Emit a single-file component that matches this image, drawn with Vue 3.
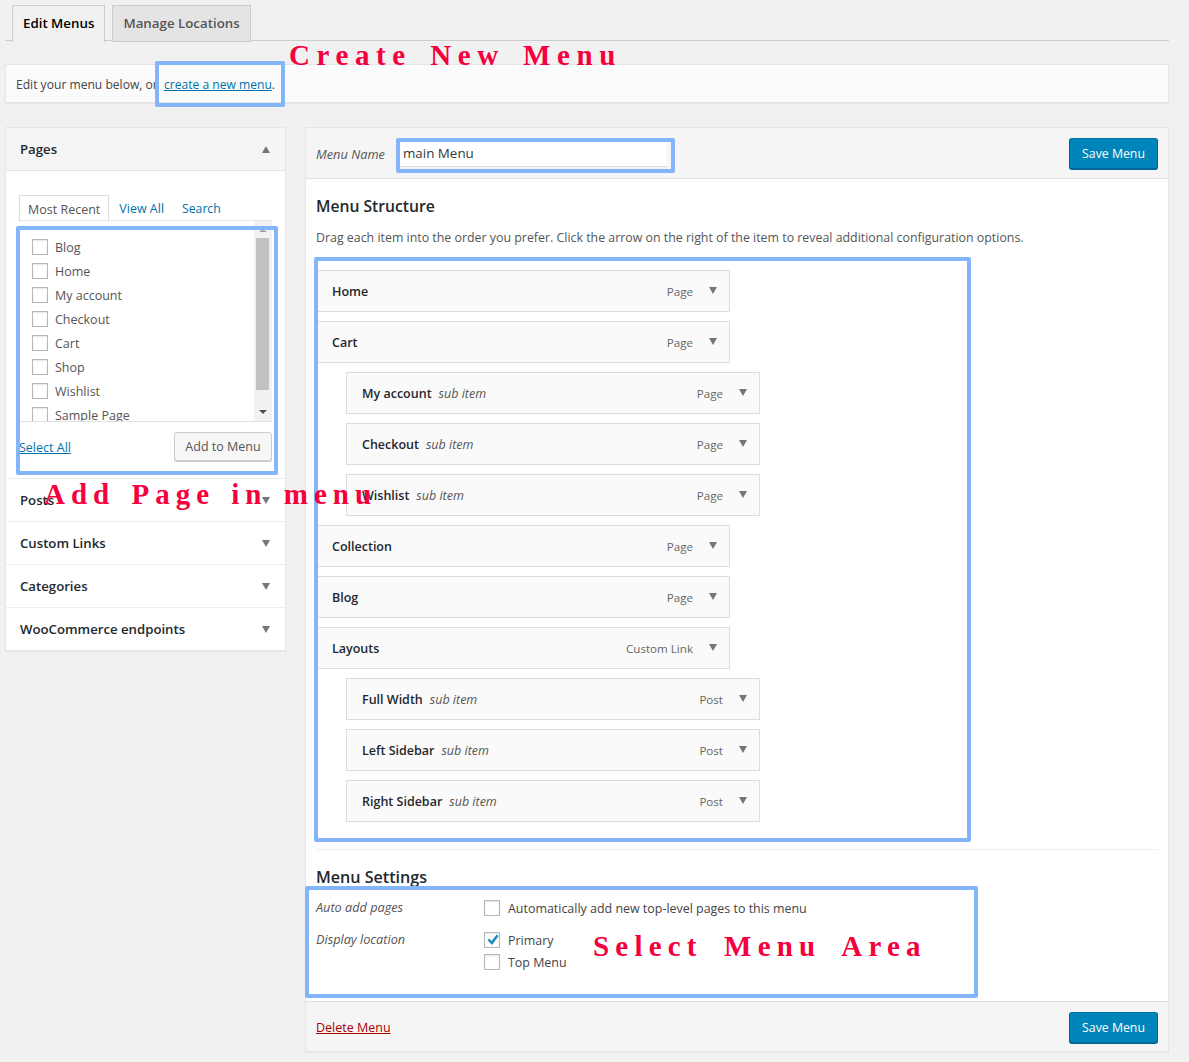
<script setup>
const pages = ['Blog', 'Home', 'My account', 'Checkout', 'Cart', 'Shop', 'Wishlist', 'Sample Page']
const closedBoxes = ['Posts', 'Custom Links', 'Categories', 'WooCommerce endpoints']

const menuItems = [
  { name: 'Home', type: 'Page' },
  { name: 'Cart', type: 'Page' },
  { name: 'My account', type: 'Page', sub: true },
  { name: 'Checkout', type: 'Page', sub: true },
  { name: 'Wishlist', type: 'Page', sub: true },
  { name: 'Collection', type: 'Page' },
  { name: 'Blog', type: 'Page' },
  { name: 'Layouts', type: 'Custom Link' },
  { name: 'Full Width', type: 'Post', sub: true },
  { name: 'Left Sidebar', type: 'Post', sub: true },
  { name: 'Right Sidebar', type: 'Post', sub: true }
]

// annotations painted on top of the screenshot
const marks = [
  { left: 155, top: 61, width: 130, height: 46 },
  { left: 396, top: 138, width: 279, height: 35 },
  { left: 16, top: 226, width: 262, height: 249 },
  { left: 314, top: 257, width: 657, height: 585 },
  { left: 305, top: 886, width: 673, height: 112 }
]
const notes = [
  { text: 'Create New Menu', left: 289, top: 37, spacing: 6.6, words: 4.5 },
  { text: 'Add Page in menu', left: 44, top: 476, spacing: 6, words: 3 },
  { text: 'Select Menu Area', left: 593, top: 928, spacing: 6.2, words: 8 }
]
</script>

<template>
  <div class="page">
    <div class="tabs">
      <span class="tab active">Edit Menus</span>
      <span class="tab">Manage Locations</span>
    </div>

    <div class="notice">
      Edit your menu below, or <a class="link">create a new menu</a>.
    </div>

    <div class="columns">
      <div class="side">
        <div class="box-head open">
          <h3>Pages</h3>
          <span class="arrow up"></span>
        </div>
        <div class="pages-body">
          <div class="mini-tabs">
            <span class="mini-tab active">Most Recent</span>
            <a class="mini-tab">View All</a>
            <a class="mini-tab">Search</a>
          </div>
          <div class="list-wrap">
            <ul class="list">
              <li v-for="p in pages" :key="p">
                <span class="check"></span>{{ p }}
              </li>
            </ul>
            <div class="scrollbar">
              <span class="sb-up"></span>
              <span class="sb-thumb"></span>
              <span class="sb-down"></span>
            </div>
          </div>
          <div class="add-row">
            <a class="link">Select All</a>
            <button class="add-btn">Add to Menu</button>
          </div>
        </div>
        <div v-for="b in closedBoxes" :key="b" class="box-head">
          <h3>{{ b }}</h3>
          <span class="arrow"></span>
        </div>
      </div>

      <div class="main">
        <div class="main-head">
          <label class="name-label">Menu Name</label>
          <input class="name-input" value="main Menu" />
          <button class="save">Save Menu</button>
        </div>

        <div class="main-body">
          <h3 class="title">Menu Structure</h3>
          <p class="hint">Drag each item into the order you prefer. Click the arrow on the right of the item to reveal additional configuration options.</p>

          <div class="items">
            <div v-for="item in menuItems" :key="item.name" class="item" :class="{ sub: item.sub }">
              <span class="item-name">{{ item.name }}</span>
              <em v-if="item.sub" class="item-sub">sub item</em>
              <span class="item-type">{{ item.type }}</span>
              <span class="arrow"></span>
            </div>
          </div>

          <div class="settings">
            <h3 class="title">Menu Settings</h3>
            <div class="set-row auto">
              <em class="set-label">Auto add pages</em>
              <div class="set-opts">
                <div class="opt"><span class="check"></span>Automatically add new top-level pages to this menu</div>
              </div>
            </div>
            <div class="set-row">
              <em class="set-label">Display location</em>
              <div class="set-opts">
                <div class="opt">
                  <span class="check">
                    <svg viewBox="0 0 16 16" width="16" height="16"><path d="M2.5 8.2 L4.2 6.6 L6.6 9.1 L11.6 2.6 L13.6 3.9 L7 13 Z" fill="#1e8cbe" /></svg>
                  </span>Primary
                </div>
                <div class="opt"><span class="check"></span>Top Menu</div>
              </div>
            </div>
          </div>
        </div>

        <div class="main-foot">
          <a class="delete">Delete Menu</a>
          <button class="save">Save Menu</button>
        </div>
      </div>
    </div>

    <span
      v-for="(m, i) in marks"
      :key="i"
      class="mark"
      :style="{ left: m.left + 'px', top: m.top + 'px', width: m.width + 'px', height: m.height + 'px' }"
    ></span>
    <span
      v-for="n in notes"
      :key="n.text"
      class="note"
      :style="{ left: n.left + 'px', top: n.top + 'px', letterSpacing: n.spacing + 'px', wordSpacing: n.words + 'px' }"
    >{{ n.text }}</span>
  </div>
</template>

<style>
html, body { background: #f1f1f1; }
</style>

<style scoped>
.page { position: relative; height: 1062px; box-sizing: border-box; padding: 0 20px 0 5px; font-family: "Open Sans", "Noto Sans", sans-serif; font-size: 13px; color: #444; background: #f1f1f1; overflow: hidden; }
h3 { margin: 0; font-weight: 600; }
.tabs { display: flex; gap: 7px; height: 41px; padding: 5px 0 0 7px; box-sizing: border-box; border-bottom: 1px solid #ccc; }
.tab { height: 35px; line-height: 35px; padding: 0 10px; border: 1px solid #ccc; background: #e4e4e4; color: #555; font-weight: 600; font-size: 13.3px; }
.tab.active { background: #f1f1f1; color: #000; border-bottom-color: #f1f1f1; height: 36px; }
.notice { margin-top: 23px; height: 39px; line-height: 39px; box-sizing: border-box; padding-left: 10px; background: #fbfbfb; border: 1px solid #e5e5e5; box-shadow: 0 1px 1px rgba(0, 0, 0, .04); font-size: 12.1px; color: #444; }
.notice .link { margin-left: 3px; }
.link { color: #0073aa; text-decoration: underline; }
.columns { display: flex; gap: 19px; align-items: flex-start; margin-top: 24px; }

.side { width: 281px; box-sizing: border-box; background: #fff; border: 1px solid #e5e5e5; box-shadow: 0 1px 1px rgba(0, 0, 0, .04); }
.box-head { display: flex; align-items: center; justify-content: space-between; height: 43px; box-sizing: border-box; padding: 0 15px 0 14px; border-top: 1px solid #eee; }
.box-head:first-child { border-top: 0; height: 43px; }
.box-head h3 { font-size: 13.2px; color: #23282d; }
.box-head.open { background: #f5f5f5; border-bottom: 1px solid #e5e5e5; }
.arrow { width: 0; height: 0; border-left: 4.5px solid transparent; border-right: 4.5px solid transparent; border-top: 7px solid #72777c; }
.arrow.up { border-top: 0; border-bottom: 7px solid #72777c; }
.pages-body { height: 307px; box-sizing: border-box; padding: 24px 13px 0 13px; }
.mini-tabs { display: flex; height: 26px; border-bottom: 1px solid #e5e5e5; box-sizing: border-box; }
.mini-tab { padding: 0 9px 0 10px; line-height: 27px; font-size: 12.5px; color: #0073aa; margin-right: 0; }
.mini-tab:last-child { padding-left: 9px; font-size: 12.2px; }
.mini-tab.active { color: #555; border: 1px solid #ddd; border-bottom: 1px solid #fff; height: 25px; margin-right: 0; padding: 0 8px; }
.list-wrap { position: relative; height: 200px; overflow: hidden; border-bottom: 1px solid #e0e0e0; }
.list { list-style: none; margin: 0; padding: 14px 0 0 13px; }
.list li { display: flex; align-items: center; height: 24px; font-size: 12.5px; color: #555; }
.check { flex: none; display: inline-block; width: 14px; height: 14px; box-sizing: content-box; margin-right: 7px; border: 1px solid #b4b9be; background: #fff; box-shadow: inset 0 1px 2px rgba(0, 0, 0, .1); }
.scrollbar { position: absolute; top: 0; right: 0; width: 18px; height: 200px; background: #f1f1f1; }
.sb-up { position: absolute; top: 8px; left: 5px; border-left: 4px solid transparent; border-right: 4px solid transparent; border-bottom: 3px solid #a3a3a3; }
.sb-thumb { position: absolute; top: 17px; left: 2px; width: 13px; height: 152px; background: #c1c1c1; }
.sb-down { position: absolute; top: 189px; left: 5px; border-left: 4px solid transparent; border-right: 4px solid transparent; border-top: 4px solid #505050; }
.add-row { display: flex; justify-content: space-between; align-items: center; margin-top: 10px; }
.add-row .link { font-size: 12.5px; padding-top: 1px; }
.add-btn { height: 29px; width: 98px; padding: 0; border: 1px solid #ccc; border-radius: 3px; background: #f7f7f7; box-shadow: 0 1px 0 #ccc; color: #555; font: 12.5px "Open Sans", "Noto Sans", sans-serif; }

.main { width: 864px; box-sizing: border-box; background: #fff; border: 1px solid #e5e5e5; box-shadow: 0 1px 1px rgba(0, 0, 0, .04); }
.main-head, .main-foot { display: flex; align-items: center; background: #f5f5f5; padding: 0 10px; }
.main-head { height: 51px; border-bottom: 1px solid #dfdfdf; box-sizing: border-box; }
.name-label { margin-top: 1px; font-style: italic; font-size: 12.8px; color: #555; margin-right: 15px; }
.name-input { margin-top: 1px; width: 267px; height: 26px; box-sizing: border-box; border: 0; border-bottom: 1px solid #ddd; padding: 0 3px; font: 13.4px "Open Sans", "Noto Sans", sans-serif; color: #32373c; background: #fff; outline: none; }
.save { margin-left: auto; width: 89px; height: 31px; padding: 0; border: 1px solid #006799; border-top-color: #0073aa; border-radius: 3px; background: #0085ba; box-shadow: 0 1px 0 #006799; color: #fff; font: 12.3px "Open Sans", "Noto Sans", sans-serif; }
.main-body { height: 822px; box-sizing: border-box; padding: 0 10px; }
.title { font-size: 15.7px; font-weight: 600; color: #23282d; line-height: 22px; }
.main-body > .title { padding-top: 16px; }
.hint { margin: 12px 0 0; font-size: 12.38px; line-height: 18px; color: #555; white-space: nowrap; }
.items { display: flex; flex-direction: column; gap: 9px; margin-top: 23px; }
.item { display: flex; align-items: center; width: 414px; height: 42px; box-sizing: border-box; padding: 0 12px 0 15px; background: #fafafa; border: 1px solid #ddd; color: #23282d; font-size: 12.5px; }
.item.sub { margin-left: 30px; }
.item .arrow { margin-bottom: 2px; }
.item-name { font-weight: 600; }
.item-sub { margin-left: 7px; color: #555; }
.item-type { margin-left: auto; margin-right: 16px; font-size: 11.6px; color: #666; }
.settings { margin-top: 27px; padding-top: 16px; border-top: 1px solid #eee; }
.settings .title { font-size: 16.1px; }
.set-row { display: flex; }
.set-row.auto { margin: 11px 0 14px; }
.set-label { width: 168px; margin-top: -1px; font-size: 12.7px; color: #555; line-height: 18px; }
.set-opts { display: flex; flex-direction: column; gap: 4px; }
.opt { display: flex; align-items: center; height: 18px; font-size: 12.45px; color: #444; }
.opt .check { margin-right: 8px; position: relative; }
.opt .check svg { position: absolute; left: 0; top: -1px; }
.main-foot { height: 50px; padding-top: 2px; border-top: 1px solid #dfdfdf; box-sizing: border-box; }
.delete { color: #a00; text-decoration: underline; font-size: 12.5px; }

.mark { position: absolute; box-sizing: border-box; border: 4px solid #82b5f9; border-radius: 2px; }
.note { position: absolute; font-family: "Liberation Serif", serif; font-size: 29px; font-weight: 700; line-height: 36px; color: #f5003d; white-space: nowrap; }
</style>
